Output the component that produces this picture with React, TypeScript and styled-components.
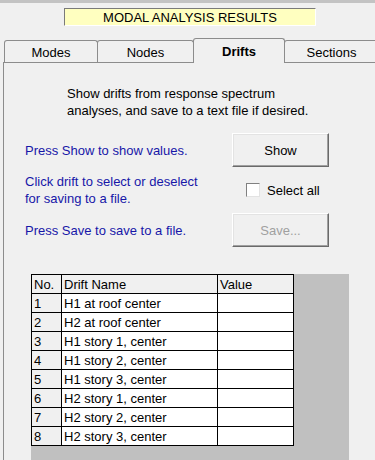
import styled, { createGlobalStyle } from 'styled-components';

const GlobalStyle = createGlobalStyle`
  html, body {
    margin: 0;
    padding: 0;
    background: #f0f0f0;
  }
  body {
    font-family: "Liberation Sans", Arial, sans-serif;
    font-size: 13px;
    color: #000;
    overflow: hidden;
  }
`;

const Window = styled.div`
  width: 375px;
  height: 460px;
  background: #f0f0f0;
  display: flex;
  flex-direction: column;
  overflow: hidden;
`;

const TopStrip = styled.div`
  height: 3px;
  background: #c3c3c3;
  flex-shrink: 0;
`;

const TitleBox = styled.div`
  margin: 5px 0 0 64px;
  width: 250px;
  height: 16px;
  background: #ffffc0;
  border-top: 1px solid #7a7a7a;
  border-left: 1px solid #7a7a7a;
  border-right: 1px solid #ffffff;
  border-bottom: 1px solid #ffffff;
  line-height: 17px;
  text-align: center;
  font-size: 13px;
  flex-shrink: 0;
`;

const TabRow = styled.div`
  display: flex;
  align-items: flex-end;
  height: 24px;
  margin-top: 12px;
  padding-left: 4px;
  flex-shrink: 0;
`;

const Tab = styled.div<{ $active?: boolean; $w: number }>`
  position: relative;
  z-index: ${(p) => (p.$active ? 2 : 1)};
  box-sizing: border-box;
  flex-shrink: 0;
  width: ${(p) => p.$w}px;
  height: ${(p) => (p.$active ? 25 : 22)}px;
  margin-left: -1px;
  margin-bottom: ${(p) => (p.$active ? -1 : 0)}px;
  background: #f0f0f0;
  border: 1px solid #8c8c8c;
  border-bottom: none;
  border-radius: 3px 3px 0 0;
  display: flex;
  align-items: center;
  justify-content: center;
  padding-top: ${(p) => (p.$active ? 0 : 1)}px;
  font-weight: ${(p) => (p.$active ? 700 : 400)};
  font-size: 13px;
  &:first-child {
    margin-left: 0;
  }
`;

const Panel = styled.div`
  flex: 1;
  margin-left: 3px;
  border-top: 1px solid #8c8c8c;
  border-left: 1px solid #8c8c8c;
  padding-top: 22px;
  display: flex;
  flex-direction: column;
`;

const Description = styled.p`
  margin: 0 0 0 63px;
  line-height: 17px;
`;

const Controls = styled.div`
  display: grid;
  grid-template-columns: 207px 96px;
  grid-template-rows: 34px 46px 34px;
  align-items: center;
  margin: 14px 0 0 21px;
`;

const Hint = styled.div`
  color: #1717a8;
  line-height: 17px;
`;

const Button = styled.button<{ $disabled?: boolean }>`
  box-sizing: border-box;
  width: 97px;
  height: 34px;
  padding: 0;
  background: #f0f0f0;
  border-top: 1px solid #ffffff;
  border-left: 1px solid #ffffff;
  border-right: 1px solid #6a6a6a;
  border-bottom: 1px solid #6a6a6a;
  box-shadow: inset -1px -1px 0 #a0a0a0, inset 1px 1px 0 #e3e3e3;
  font-family: inherit;
  font-size: 13px;
  color: ${(p) => (p.$disabled ? '#a0a0a0' : '#000')};
`;

const CheckLabel = styled.label`
  display: flex;
  align-items: center;
  gap: 7px;
  padding-left: 14px;
`;

const CheckBox = styled.span`
  box-sizing: border-box;
  width: 14px;
  height: 14px;
  background: #fff;
  border-top: 1px solid #808080;
  border-left: 1px solid #808080;
  border-right: 1px solid #e3e3e3;
  border-bottom: 1px solid #e3e3e3;
`;

const GridArea = styled.div`
  flex: 1;
  margin: 27px 0 0 27px;
  width: 318px;
  background: #c0c0c0;
`;

const Table = styled.table`
  border-collapse: collapse;
  table-layout: fixed;
  font-size: 13px;
`;

const Cell = styled.td<{ $w?: number; $head?: boolean }>`
  box-sizing: border-box;
  width: ${(p) => (p.$w ? `${p.$w}px` : 'auto')};
  height: 19px;
  padding: 0 0 0 2px;
  border: 1px solid #000;
  background: ${(p) => (p.$head ? '#f0f0f0' : '#ffffff')};
  line-height: 17px;
  white-space: nowrap;
  overflow: hidden;
`;

const tabs = [
  { label: 'Modes', w: 94 },
  { label: 'Nodes', w: 97 },
  { label: 'Drifts', w: 92, active: true },
  { label: 'Sections', w: 95 },
];

const drifts = [
  'H1 at roof center',
  'H2 at roof center',
  'H1 story 1, center',
  'H1 story 2, center',
  'H1 story 3, center',
  'H2 story 1, center',
  'H2 story 2, center',
  'H2 story 3, center',
];

export default function App() {
  return (
    <Window>
      <GlobalStyle />
      <TopStrip />
      <TitleBox>MODAL ANALYSIS RESULTS</TitleBox>
      <TabRow>
        {tabs.map((t) => (
          <Tab key={t.label} $w={t.w} $active={t.active}>
            {t.label}
          </Tab>
        ))}
      </TabRow>
      <Panel>
        <Description>
          Show drifts from response spectrum
          <br />
          analyses, and save to a text file if desired.
        </Description>
        <Controls>
          <Hint>Press Show to show values.</Hint>
          <Button>Show</Button>
          <Hint>
            Click drift to select or deselect
            <br />
            for saving to a file.
          </Hint>
          <CheckLabel>
            <CheckBox />
            Select all
          </CheckLabel>
          <Hint>Press Save to save to a file.</Hint>
          <Button $disabled>Save...</Button>
        </Controls>
        <GridArea>
          <Table>
            <tbody>
              <tr>
                <Cell $w={30} $head>No.</Cell>
                <Cell $w={156} $head>Drift Name</Cell>
                <Cell $w={76} $head>Value</Cell>
              </tr>
              {drifts.map((d, i) => (
                <tr key={d}>
                  <Cell $head>{i + 1}</Cell>
                  <Cell>{d}</Cell>
                  <Cell />
                </tr>
              ))}
            </tbody>
          </Table>
        </GridArea>
      </Panel>
    </Window>
  );
}
